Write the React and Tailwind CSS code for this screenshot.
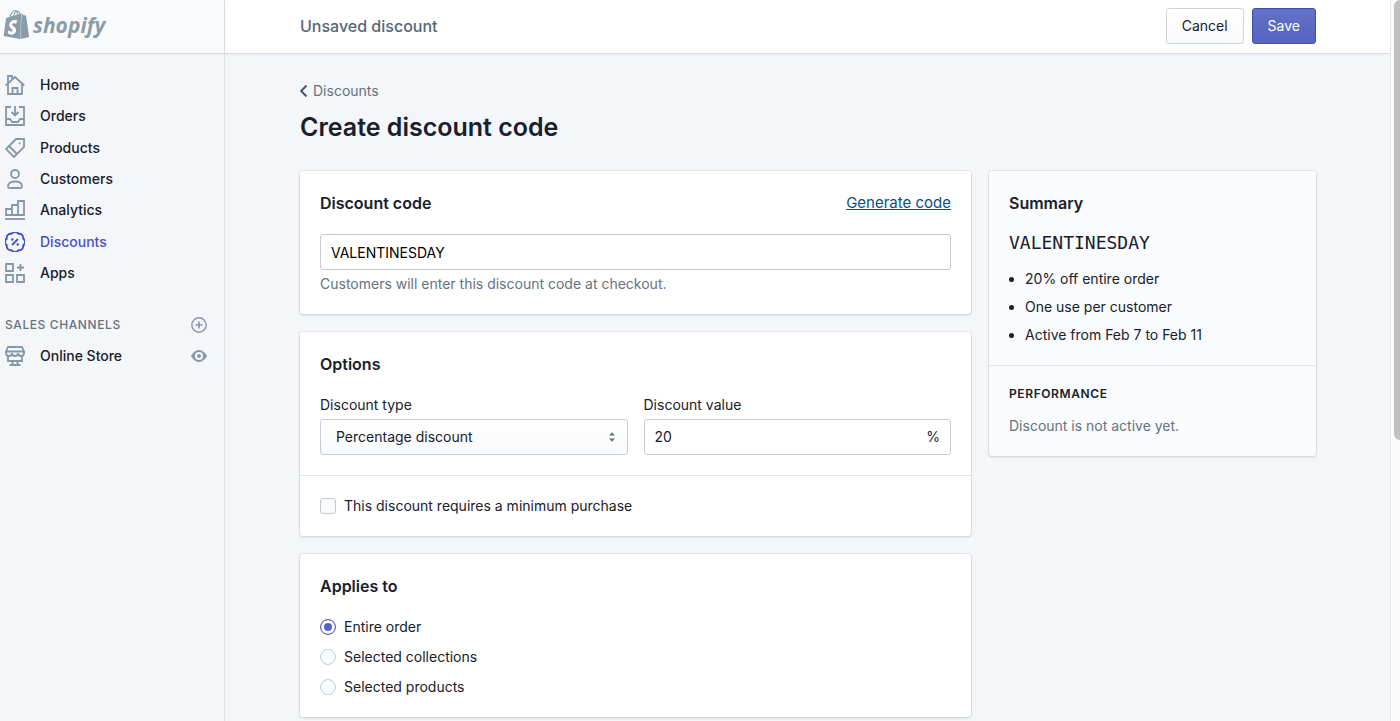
import React, { useState } from 'react';
import { SiShopify } from 'react-icons/si';

const icons = {
  home: (
    <>
      <path d="M.7 10.500 10 2l9.300 8.500" />
      <path d="M3 9v10h14V9" />
      <path d="M7.500 19v-6h5v6" />
      <path d="M3 8.500V1h4v3.500" />
    </>
  ),
  orders: (
    <>
      <path d="M6 1H1v18h18V1h-5" />
      <path d="M10 0v9M6.500 6 10 9.500 13.500 6" />
      <path d="M1 13h4l2 3h6l2-3h4" />
    </>
  ),
  products: (
    <>
      <path d="M11 1h8v8L9 19 1 11z" />
      <path d="m4 8 8 8" />
      <circle cx="14.600" cy="5.400" r=".7" fill="currentColor" strokeWidth="0.6" />
    </>
  ),
  customers: (
    <>
      <circle cx="10" cy="5" r="4" />
      <path d="M10 12.500c-4 0-7 1.700-7 4.700 0 1.100.8 1.800 2 1.800h10c1.200 0 2-.7 2-1.800 0-3-3-4.700-7-4.700z" />
    </>
  ),
  analytics: (
    <>
      <path d="M1 15V9h6v6zM7 15V5h6v10zM13 15V1h6v14z" />
      <path d="M0 19h20" />
    </>
  ),
  discounts: (
    <>
      <path
        transform="translate(-2 -2)"
        d="M3.850 8.620a4 4 0 0 1 4.780-4.770 4 4 0 0 1 6.740 0 4 4 0 0 1 4.780 4.780 4 4 0 0 1 0 6.740 4 4 0 0 1-4.770 4.780 4 4 0 0 1-6.750 0 4 4 0 0 1-4.780-4.770 4 4 0 0 1 0-6.760Z"
      />
      <path d="m7 13 6-6" />
      <circle cx="7.300" cy="7.500" r="1.200" fill="currentColor" stroke="none" />
      <circle cx="12.700" cy="12.500" r="1.200" fill="currentColor" stroke="none" />
    </>
  ),
  apps: (
    <>
      <path d="M1 1h7v7H1zM1 12h7v7H1zM12 12h7v7h-7z" />
      <path d="M15.500 1v7M12 4.500h7" />
    </>
  ),
  store: (
    <>
      <path d="M3 1h14l2 4.500H1z" />
      <path d="M1 5.500V7a3 3 0 0 0 6 0 3 3 0 0 0 6 0 3 3 0 0 0 6 0V5.500" />
      <path d="M3 9.500V15h14V9.500M8 15l-1 4M12 15l1 4M4.500 19h11" />
    </>
  ),
};

const Icon = ({ name }) => (
  <svg
    viewBox="0 0 20 20"
    className="w-5 h-5 shrink-0"
    fill="none"
    stroke="currentColor"
    strokeWidth="1.8"
    aria-hidden="true"
  >
    {icons[name]}
  </svg>
);

const navItems = [
  { label: 'Home', icon: 'home' },
  { label: 'Orders', icon: 'orders' },
  { label: 'Products', icon: 'products' },
  { label: 'Customers', icon: 'customers' },
  { label: 'Analytics', icon: 'analytics' },
  { label: 'Discounts', icon: 'discounts', active: true },
  { label: 'Apps', icon: 'apps' },
];

const targets = ['Entire order', 'Selected collections', 'Selected products'];

const NavLink = ({ label, icon, active }) => (
  <a
    href="#"
    className={`flex items-center gap-[15px] text-sm font-medium ${active ? 'text-[#4550c8]' : 'text-[#17202b]'}`}
  >
    <span className={active ? 'text-[#4550c8]' : 'text-[#8698a8]'}>
      <Icon name={icon} />
    </span>
    {label}
  </a>
);

const Card = ({ children, className = 'bg-white' }) => (
  <section
    className={`rounded-[3px] shadow-[0_0_0_1px_rgba(63,83,105,0.07),0_1px_3px_rgba(63,83,105,0.18)] ${className}`}
  >
    {children}
  </section>
);

const Sidebar = () => (
  <aside className="w-[225px] shrink-0 border-r border-[#dde2e8] bg-[#f4f6fa]">
    <div className="flex h-[54px] items-center gap-[2px] border-b border-[#d9dde3] bg-[#f9fafc] pb-1 pl-[2px] text-[#8a9baa] shadow-xs">
      <SiShopify className="w-[29px] h-[29px]" aria-hidden="true" />
      <span className="font-['Open_Sans',sans-serif] text-[21px] font-bold italic">shopify</span>
    </div>
    <nav className="px-[5px] pt-[15px]">
      <ul className="grid h-[220px] auto-rows-fr">
        {navItems.map((item) => (
          <li key={item.label} className="flex items-center">
            <NavLink {...item} />
          </li>
        ))}
      </ul>
      <div className="mt-5 flex h-[31px] items-center justify-between pr-3">
        <h2 className="text-xs font-medium tracking-wider text-[#637381]">SALES CHANNELS</h2>
        <button aria-label="Add sales channel" className="text-[#8698a8]">
          <svg viewBox="0 0 16 16" className="w-4 h-4" fill="none" stroke="currentColor" strokeWidth="1.4">
            <circle cx="8" cy="8" r="7.200" />
            <path d="M8 4.500v7M4.500 8h7" strokeWidth="1.600" />
          </svg>
        </button>
      </div>
      <div className="flex h-[31px] items-center justify-between pr-3">
        <NavLink label="Online Store" icon="store" />
        <button aria-label="View your online store" className="text-[#8698a8]">
          <svg viewBox="0 0 16 16" className="w-4 h-4">
            <path
              fill="currentColor"
              fillRule="evenodd"
              d="M8 2C3 2 0 8 0 8s3 6 8 6 8-6 8-6-3-6-8-6zM8 12a4 4 0 1 1 0-8 4 4 0 0 1 0 8z"
            />
            <circle cx="8" cy="8" r="2" fill="currentColor" />
          </svg>
        </button>
      </div>
    </nav>
  </aside>
);

export default function App() {
  const [code, setCode] = useState('VALENTINESDAY');
  const [value, setValue] = useState('20');
  const [minimum, setMinimum] = useState(false);
  const [target, setTarget] = useState('Entire order');

  return (
    <div className="flex h-screen overflow-hidden bg-[#f4f6fa] font-['Inter',sans-serif] text-sm text-[#17202b]">
      <Sidebar />

      <div className="flex min-w-0 flex-1 flex-col">
        <header className="h-[54px] shrink-0 border-b border-[#d9dde3] bg-white pr-[74px] pl-[75px] shadow-xs">
          <div className="flex h-[51px] items-center justify-between">
            <p className="text-base font-medium text-[#546778]">Unsaved discount</p>
            <div className="flex gap-2">
              <button className="h-9 rounded-[3px] border border-[#cbd3db] bg-linear-to-b from-white to-[#f9fafb] px-[15px]">
                Cancel
              </button>
              <button className="h-9 rounded-[3px] border border-[#3f4eae] bg-linear-to-b from-[#6371c7] to-[#5563c1] px-[15px] text-white">
                Save
              </button>
            </div>
          </div>
        </header>

        <main className="flex-1 pt-[27px] pr-[74px] pl-[75px]">
          <a href="#" className="flex items-center gap-[5px] text-[#637381]">
            <svg viewBox="0 0 8 12" className="w-2 h-3 text-[#465868]" fill="none" stroke="currentColor" strokeWidth="2">
              <path d="M6.500.5 1.200 6l5.300 5.500" />
            </svg>
            Discounts
          </a>
          <h1 className="mt-2 text-[25px] leading-9 font-semibold">Create discount code</h1>

          <div className="mt-[26px] flex items-start gap-[18px]">
            <div className="flex min-w-0 flex-[671] flex-col gap-[18px]">
              <Card>
                <div className="p-5 pt-[22px]">
                  <div className="flex items-center justify-between">
                    <h2 className="text-base leading-5 font-semibold">
                      <label htmlFor="code">Discount code</label>
                    </h2>
                    <a href="#" className="text-[15px] leading-5 text-[#084e8a] underline">
                      Generate code
                    </a>
                  </div>
                  <input
                    id="code"
                    value={code}
                    onChange={(e) => setCode(e.target.value)}
                    className="mt-[21px] block h-9 w-full rounded-[3px] border border-[#c4cdd5] bg-white px-[10px] text-black"
                  />
                  <p className="mt-1 leading-5 text-[#637381]">Customers will enter this discount code at checkout.</p>
                </div>
              </Card>

              <Card>
                <div className="p-5 pt-[22px]">
                  <h2 className="text-base leading-5 font-semibold">Options</h2>
                  <div className="mt-[21px] grid grid-cols-2 gap-4">
                    <div>
                      <label htmlFor="type" className="block leading-5">
                        Discount type
                      </label>
                      <div className="relative mt-1">
                        <select
                          id="type"
                          className="block h-9 w-full appearance-none rounded-[3px] border border-[#c4cdd5] bg-linear-to-b from-white to-[#f9fafb] px-[15px]"
                        >
                          <option>Percentage discount</option>
                          <option>Fixed amount discount</option>
                          <option>Free shipping</option>
                        </select>
                        <svg viewBox="0 0 8 10" className="pointer-events-none absolute top-[13px] right-3 w-2 h-[10px] text-[#637381]">
                          <path d="m1 3.500 3-3.300 3 3.300zM1 6.500l3 3.300 3-3.300z" fill="currentColor" />
                        </svg>
                      </div>
                    </div>
                    <div>
                      <label htmlFor="value" className="block leading-5">
                        Discount value
                      </label>
                      <div className="mt-1 flex h-9 items-center rounded-[3px] border border-[#c4cdd5] px-[10px]">
                        <input
                          id="value"
                          value={value}
                          onChange={(e) => setValue(e.target.value)}
                          className="min-w-0 flex-1 outline-none"
                        />
                        <span>%</span>
                      </div>
                    </div>
                  </div>
                </div>
                <div className="border-t border-[#e1e5ea] p-5">
                  <label className="flex items-center gap-2 leading-5">
                    <input
                      type="checkbox"
                      checked={minimum}
                      onChange={(e) => setMinimum(e.target.checked)}
                      className="w-4 h-4 appearance-none rounded-[3px] border border-[#c4cdd5] bg-[#fbfcfd] checked:bg-[#5563c1]"
                    />
                    This discount requires a minimum purchase
                  </label>
                </div>
              </Card>

              <Card>
                <fieldset className="p-5 pt-[22px]">
                  <legend className="contents">
                    <span className="block text-base leading-5 font-semibold">Applies to</span>
                  </legend>
                  <div className="mt-[21px] flex flex-col gap-[10px]">
                    {targets.map((item) => (
                      <label key={item} className="flex items-center gap-2 leading-5">
                        <input
                          type="radio"
                          name="target"
                          checked={target === item}
                          onChange={() => setTarget(item)}
                          className="w-4 h-4 appearance-none rounded-full border border-[#c4cdd5] bg-[#fbfcfd] checked:border-[#5563c1] checked:bg-[#5563c1] checked:shadow-[inset_0_0_0_3px_white]"
                        />
                        {item}
                      </label>
                    ))}
                  </div>
                </fieldset>
              </Card>
            </div>

            <div className="min-w-0 flex-[327]">
              <Card className="bg-[#fafbfc]">
                <div className="p-5 pt-[22px]">
                  <h2 className="text-base leading-5 font-semibold">Summary</h2>
                  <p className="mt-[18px] font-['DejaVu_Sans_Mono',monospace] text-lg leading-6">{code}</p>
                  <ul className="mt-[14px] flex list-disc flex-col gap-2 pl-4 leading-5">
                    <li>{value}% off entire order</li>
                    <li>One use per customer</li>
                    <li>Active from Feb 7 to Feb 11</li>
                  </ul>
                </div>
                <div className="border-t border-[#e1e5ea] p-5">
                  <h3 className="text-xs font-semibold tracking-wider">PERFORMANCE</h3>
                  <p className="mt-[14px] leading-5 text-[#637381]">Discount is not active yet.</p>
                </div>
              </Card>
            </div>
          </div>
        </main>
      </div>

      {/* Scrollbar */}
      <div className="w-[10px] shrink-0 border-l border-[#e5e6e8] bg-[#fafafa] pl-[3px]">
        <div className="h-[61%] rounded-tl-md rounded-bl-md bg-[#c1c1c1]" />
      </div>
    </div>
  );
}
